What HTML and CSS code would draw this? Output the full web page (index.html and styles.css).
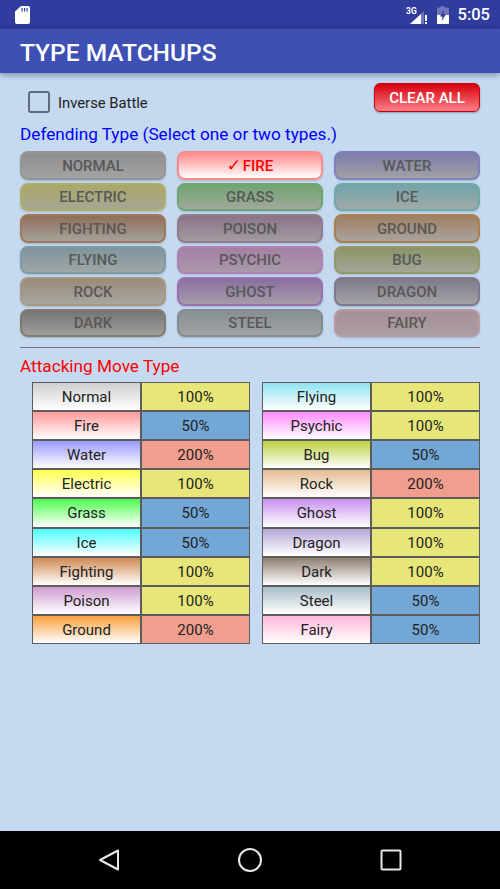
FILE: index.html
```
<!DOCTYPE html>
<html lang="en">
<head>
<meta charset="utf-8">
<title>Type Matchups</title>
<link rel="stylesheet" href="styles.css">
</head>
<body>
<div class="screen">
  <header class="status">
    <svg class="sd" viewBox="0 0 15 18"><path fill-rule="evenodd" d="M6 0h7a2 2 0 0 1 2 2v14a2 2 0 0 1-2 2H2a2 2 0 0 1-2-2V5.500zM6.500 2v3.500h1.200V2zM9 2v3.500h1.200V2zM11.500 2v3.500h1.200V2z" fill="#fff"/></svg>
    <div class="status-right">
      <svg class="signal" viewBox="0 0 22 18"><text x="0" y="7.500" class="net">3G</text><path d="M18 5v13H4z" fill="#fff" fill-opacity=".3"/><path d="M15 8v10H4z" fill="#fff"/><path d="M19 9h2v6h-2zM19 16h2v2h-2z" fill="#fff"/></svg>
      <svg class="battery" viewBox="0 0 12 18"><path d="M3.500 0h4v1.500H11a1 1 0 0 1 1 1V17a1 1 0 0 1-1 1H1a1 1 0 0 1-1-1V2.500a1 1 0 0 1 1-1h2.500z" fill="#fff" fill-opacity=".3"/><path d="M0 9h12v8a1 1 0 0 1-1 1H1a1 1 0 0 1-1-1z" fill="#fff"/><path d="M7 3.500 3 10.500h2.500L4.500 15 9 8.500H6.500z" fill="#303c9e"/></svg>
      <span class="clock">5:05</span>
    </div>
  </header>
  <div class="appbar">TYPE MATCHUPS</div>
  <main class="content">
    <div class="top-row">
      <label class="inverse"><span class="box"></span><span class="inverse-text">Inverse Battle</span></label>
      <button class="clear">CLEAR ALL</button>
    </div>
    <h2 class="heading defend">Defending Type (Select one or two types.)</h2>
    <div class="types">
      <div class="type t-normal">NORMAL</div>
      <div class="type selected"><span class="check">✓</span>FIRE</div>
      <div class="type t-water">WATER</div>
      <div class="type t-electric">ELECTRIC</div>
      <div class="type t-grass">GRASS</div>
      <div class="type t-ice">ICE</div>
      <div class="type t-fighting">FIGHTING</div>
      <div class="type t-poison">POISON</div>
      <div class="type t-ground">GROUND</div>
      <div class="type t-flying">FLYING</div>
      <div class="type t-psychic">PSYCHIC</div>
      <div class="type t-bug">BUG</div>
      <div class="type t-rock">ROCK</div>
      <div class="type t-ghost">GHOST</div>
      <div class="type t-dragon">DRAGON</div>
      <div class="type t-dark">DARK</div>
      <div class="type t-steel">STEEL</div>
      <div class="type t-fairy">FAIRY</div>
    </div>
    <hr class="rule">
    <h2 class="heading attack">Attacking Move Type</h2>
    <div class="tables">
      <div class="table">
        <div class="name m-normal">Normal</div><div class="val x1">100%</div>
        <div class="name m-fire">Fire</div><div class="val half">50%</div>
        <div class="name m-water">Water</div><div class="val x2">200%</div>
        <div class="name m-electric">Electric</div><div class="val x1">100%</div>
        <div class="name m-grass">Grass</div><div class="val half">50%</div>
        <div class="name m-ice">Ice</div><div class="val half">50%</div>
        <div class="name m-fighting">Fighting</div><div class="val x1">100%</div>
        <div class="name m-poison">Poison</div><div class="val x1">100%</div>
        <div class="name m-ground">Ground</div><div class="val x2">200%</div>
      </div>
      <div class="table">
        <div class="name m-flying">Flying</div><div class="val x1">100%</div>
        <div class="name m-psychic">Psychic</div><div class="val x1">100%</div>
        <div class="name m-bug">Bug</div><div class="val half">50%</div>
        <div class="name m-rock">Rock</div><div class="val x2">200%</div>
        <div class="name m-ghost">Ghost</div><div class="val x1">100%</div>
        <div class="name m-dragon">Dragon</div><div class="val x1">100%</div>
        <div class="name m-dark">Dark</div><div class="val x1">100%</div>
        <div class="name m-steel">Steel</div><div class="val half">50%</div>
        <div class="name m-fairy">Fairy</div><div class="val half">50%</div>
      </div>
    </div>
  </main>
  <nav class="navbar">
    <svg class="nav-icon" viewBox="0 0 22 24"><path d="M20 2.500v19L2 12z" fill="none" stroke="#e8e8e8" stroke-width="2" stroke-linejoin="round"/></svg>
    <svg class="nav-icon nav-home" viewBox="0 0 24 24"><circle cx="12" cy="12" r="11" fill="none" stroke="#e8e8e8" stroke-width="2"/></svg>
    <svg class="nav-icon" viewBox="0 0 22 24"><rect x="1.500" y="2.500" width="19" height="19" rx="1" fill="none" stroke="#e8e8e8" stroke-width="2"/></svg>
  </nav>
</div>
</body>
</html>
```
FILE: styles.css
```
* { box-sizing: border-box; }
html, body { margin: 0; padding: 0; }
body { font-family: Roboto, "Liberation Sans", sans-serif; background: #c5daf0; }
.screen { width: 500px; height: 889px; display: flex; flex-direction: column; overflow: hidden; }

.status { height: 29px; flex: none; background: #303c9e; display: flex; align-items: center; justify-content: space-between; padding: 0 10px 0 15px; }
.sd { width: 15px; height: 18px; display: block; }
.status-right { display: flex; align-items: center; }
.signal { width: 22px; height: 18px; display: block; }
.net { font: 700 8.500px Roboto, sans-serif; fill: #fff; }
.battery { width: 12px; height: 18px; margin-left: 9px; display: block; }
.clock { color: #fff; font-size: 16.500px; font-weight: 500; margin-left: 9px; }

.appbar { height: 44px; flex: none; background: #3e50b4; color: #fff; font-size: 24.500px; font-weight: 500; line-height: 47px; padding-left: 20px; box-shadow: 0 2px 6px rgba(0, 0, 0, .35); position: relative; }

.content { flex: 1; padding: 10px 20px 0; background: #c5daf0; }
.top-row { display: flex; justify-content: space-between; align-items: flex-start; height: 30px; }
.inverse { display: flex; align-items: center; margin: 8px 0 0 8px; font-size: 14.800px; color: #222; height: 22px; }
.inverse-text { padding-top: 2px; }
.box { width: 22px; height: 22px; border: 2.500px solid #5f6b78; border-radius: 3px; margin-right: 8px; }
.clear { width: 106px; height: 29px; padding: 0; border: 1.500px solid #c8000c; border-radius: 6px; background: linear-gradient(#d8000c, #f98088); color: #fff; font: 500 15px Roboto, sans-serif; box-shadow: 0 1px 2px rgba(0, 0, 0, .3); }

.heading { margin: 0; font-size: 17.200px; font-weight: 400; line-height: 19px; }
.defend { color: #0000ff; margin-top: 12px; }
.attack { color: #ff0000; margin-top: 9px; }

.types { display: grid; grid-template-columns: repeat(3, 146px); column-gap: 11px; row-gap: 3px; grid-auto-rows: 28.500px; margin-top: 7px; }
.type { display: flex; align-items: center; justify-content: center; padding-top: 1px; border-radius: 8px; border: 2px solid var(--edge); background: linear-gradient(var(--top), var(--bottom)); color: #585858; font-size: 15px; font-weight: 500; box-shadow: 0 1px 2px rgba(60, 80, 110, .25); }
.selected { --edge: #ff8a8a; --top: #ff8c8c; --bottom: #fff; color: #ff0000; }
.check { font-family: "DejaVu Sans", sans-serif; font-size: 17px; line-height: 1; width: 16px; margin-right: 0; }
.t-normal { --edge: #959595; --top: #8e8e8e; --bottom: #a3a3a3; }
.t-water { --edge: #8080b8; --top: #7c7ca8; --bottom: #a1a0a6; }
.t-electric { --edge: #b0ae6a; --top: #a9a86a; --bottom: #a6a692; }
.t-grass { --edge: #6ea670; --top: #70a470; --bottom: #a1a99d; }
.t-ice { --edge: #70a8a8; --top: #72a4a8; --bottom: #a1a9a9; }
.t-fighting { --edge: #a07858; --top: #8f6f58; --bottom: #a6a19b; }
.t-poison { --edge: #917d90; --top: #8b7488; --bottom: #a19b9f; }
.t-ground { --edge: #aa8050; --top: #a08062; --bottom: #a9a39d; }
.t-flying { --edge: #7f9aa5; --top: #7f959c; --bottom: #9fa6a6; }
.t-psychic { --edge: #b080b0; --top: #a67fa6; --bottom: #a999a9; }
.t-bug { --edge: #939a68; --top: #8a9468; --bottom: #a4a797; }
.t-rock { --edge: #a89880; --top: #9b8b7a; --bottom: #a9a6a1; }
.t-ghost { --edge: #9a70b0; --top: #8a6fa0; --bottom: #a69ba9; }
.t-dragon { --edge: #80788f; --top: #7f7a8a; --bottom: #a6a3a6; }
.t-dark { --edge: #857a70; --top: #767472; --bottom: #9f9f9d; }
.t-steel { --edge: #858c90; --top: #878f94; --bottom: #a1a3a4; }
.t-fairy { --edge: #b89aa5; --top: #a88f98; --bottom: #a99ea1; }

.rule { border: 0; height: 1px; background: #777; margin: 10px 0 0; }

.tables { display: grid; grid-template-columns: repeat(2, 218px); column-gap: 12px; padding-left: 12px; margin-top: 6px; }
.table { height: 262px; display: grid; grid-template-columns: 1fr 1fr; grid-template-rows: repeat(9, 1fr); gap: 2px; padding: 1px; background: #5c5c5c; }
.name, .val { display: flex; align-items: center; justify-content: center; font-size: 15px; color: #222; padding-top: 1px; }
.name { background: linear-gradient(var(--c), #fff); }
.x1 { background: #e7e678; }
.half { background: #72a7d6; }
.x2 { background: #f09e8e; }
.m-normal { --c: #cfcfcf; }
.m-fire { --c: #ff9a9a; }
.m-water { --c: #9a9aff; }
.m-electric { --c: #ffff4d; }
.m-grass { --c: #4dff4d; }
.m-ice { --c: #4dffff; }
.m-fighting { --c: #cf8a55; }
.m-poison { --c: #cf9ccf; }
.m-ground { --c: #f7a03c; }
.m-flying { --c: #8fe3f0; }
.m-psychic { --c: #ff8aff; }
.m-bug { --c: #bcd040; }
.m-rock { --c: #e3bc90; }
.m-ghost { --c: #c890f0; }
.m-dragon { --c: #b8a8d8; }
.m-dark { --c: #8f7f72; }
.m-steel { --c: #a8bcc8; }
.m-fairy { --c: #ffb8d8; }

.navbar { height: 58px; flex: none; background: #000; display: flex; align-items: center; justify-content: space-between; padding: 0 98px; }
.nav-icon { width: 22px; height: 24px; display: block; }
.nav-home { width: 24px; }
```
